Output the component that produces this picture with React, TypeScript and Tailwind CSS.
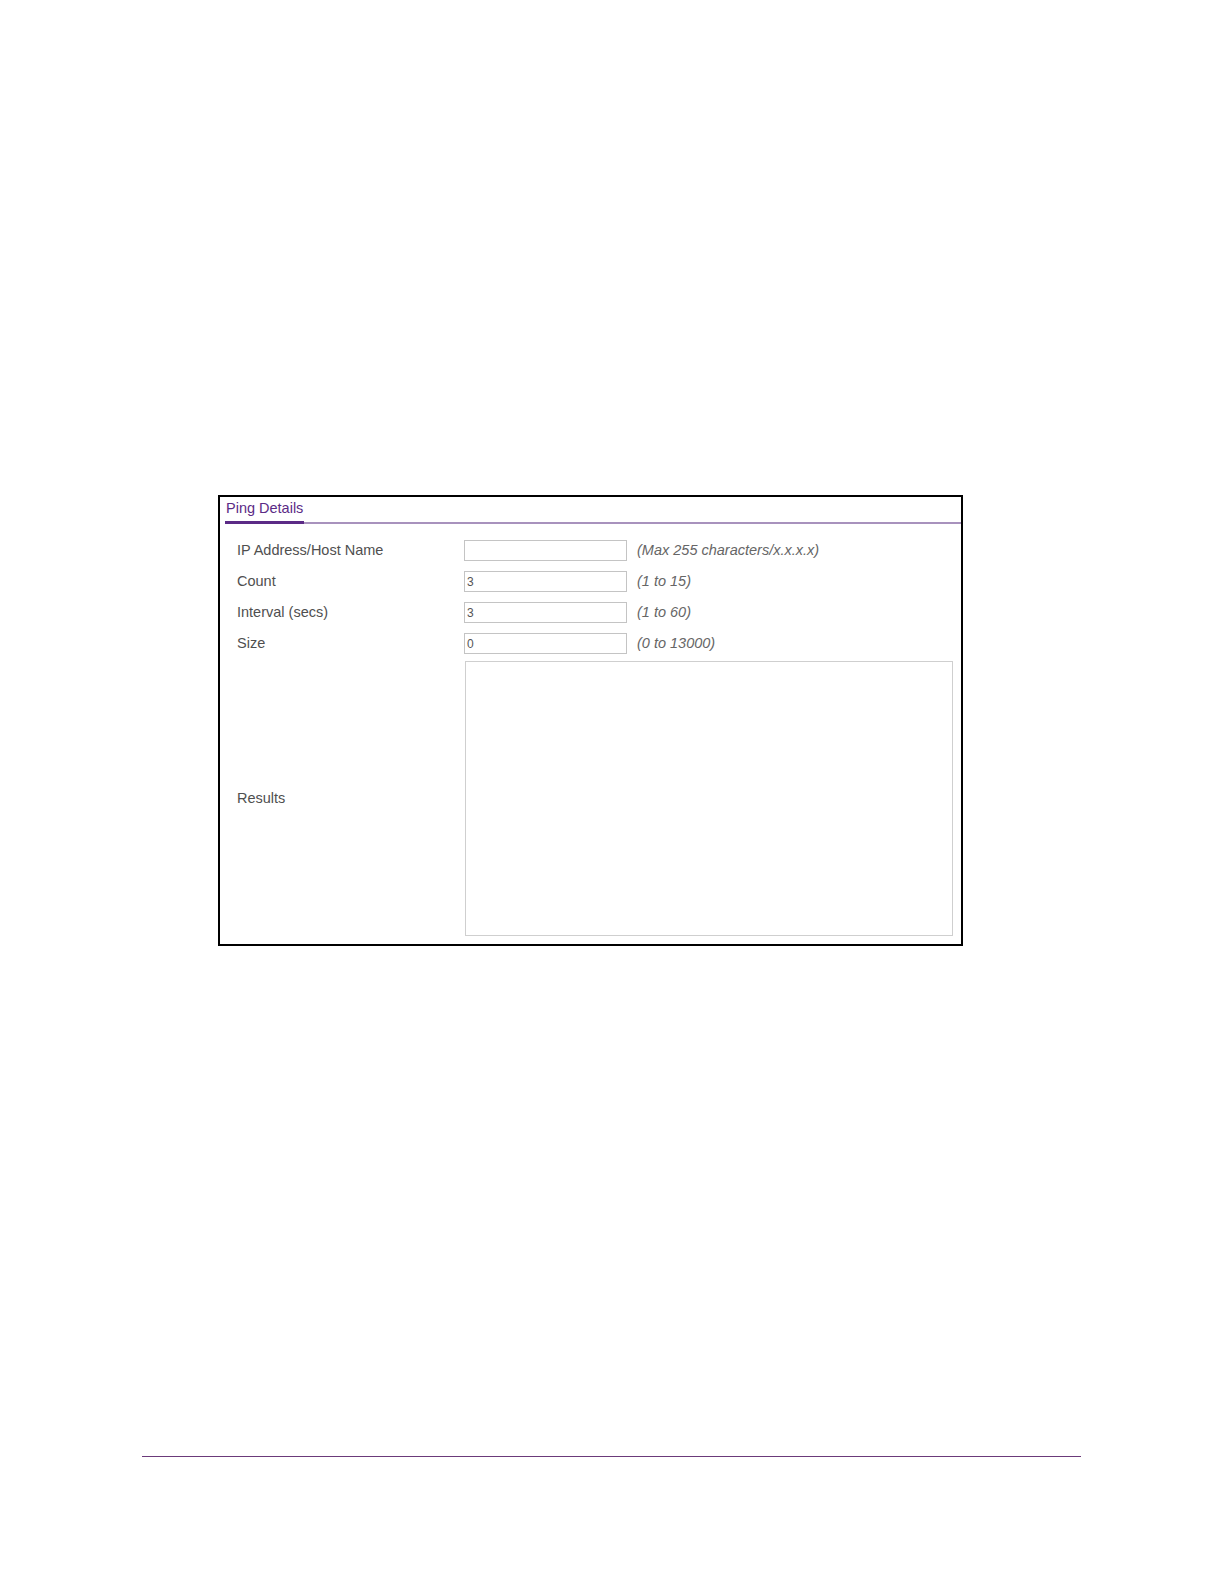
const font = { fontFamily: '"Liberation Sans", Arial, sans-serif' };

const rows = [
  { label: "IP Address/Host Name", value: "", hint: "(Max 255 characters/x.x.x.x)" },
  { label: "Count", value: "3", hint: "(1 to 15)" },
  { label: "Interval (secs)", value: "3", hint: "(1 to 60)" },
  { label: "Size", value: "0", hint: "(0 to 13000)" },
];

export default function App() {
  return (
    <div className="w-[1224px] h-[1584px] bg-white relative" style={font}>
      <div className="pt-[495px] pl-[218px]">
        <div className="w-[745px] h-[451px] border-2 border-black flex flex-col">
          <div className="ml-[5px] pt-[3px] border-b-2 border-[#a892bd] flex">
            <span className="text-[14.5px] leading-[17px] pb-[4px] px-[1px] text-[#5b2a86] border-b-[3px] border-[#5b2a86] -mb-[2px]">
              Ping Details
            </span>
          </div>
          <div className="mt-[11px] flex flex-col">
            {rows.map((r) => (
              <div key={r.label} className="h-[31px] flex items-center">
                <div className="w-[244px] pl-[17px] text-[14.5px] text-[#4f4f4f]">{r.label}</div>
                <div className="w-[163px] h-[21px] border border-[#c4c4c4] bg-white flex items-center pl-[2px] text-[12px] text-[#555]">
                  {r.value}
                </div>
                <div className="ml-[10px] text-[14.5px] italic text-[#666]">{r.hint}</div>
              </div>
            ))}
          </div>
          <div className="mt-[2px] flex items-center">
            <div className="w-[245px] pl-[17px] text-[14.5px] text-[#4f4f4f]">Results</div>
            <div className="w-[488px] h-[275px] border border-[#cfcfcf] bg-white" />
          </div>
        </div>
      </div>
      <div className="absolute left-[142px] top-[1456px] w-[939px] h-[1px] bg-[#6b3a7a]" />
    </div>
  );
}
